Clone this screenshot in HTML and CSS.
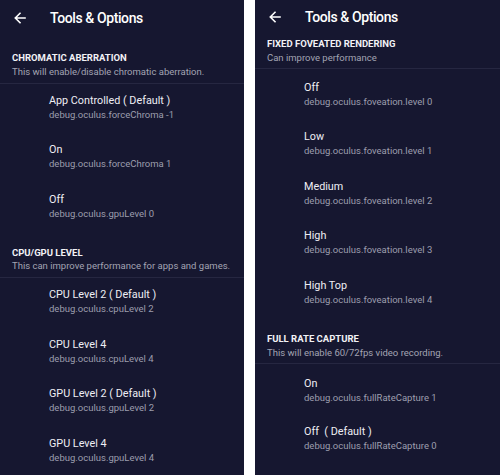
FILE: index.html
```html
<!DOCTYPE html>
<html>
<head>
<meta charset="utf-8">
<link rel="stylesheet" href="styles.css">
</head>
<body>
<div class="screens">
  <div class="panel panel-left">
    <div class="appbar">
      <svg class="back" viewBox="0 0 12 12" width="12" height="12"><path d="M11 6H1.5M6 1.3L1.3 6 6 10.7" fill="none" stroke="#fff" stroke-width="1.6" stroke-linecap="square"/></svg>
      <span class="title">Tools &amp; Options</span>
    </div>
    <div class="section">
      <div class="sec-title">CHROMATIC ABERRATION</div>
      <div class="sec-sub">This will enable/disable chromatic aberration.</div>
    </div>
    <div class="item"><div class="it-title">App Controlled ( Default )</div><div class="it-sub">debug.oculus.forceChroma -1</div></div>
    <div class="item"><div class="it-title">On</div><div class="it-sub">debug.oculus.forceChroma 1</div></div>
    <div class="item"><div class="it-title">Off</div><div class="it-sub">debug.oculus.gpuLevel 0</div></div>
    <div class="section">
      <div class="sec-title">CPU/GPU LEVEL</div>
      <div class="sec-sub">This can improve performance for apps and games.</div>
    </div>
    <div class="item"><div class="it-title">CPU Level 2 ( Default )</div><div class="it-sub">debug.oculus.cpuLevel 2</div></div>
    <div class="item"><div class="it-title">CPU Level 4</div><div class="it-sub">debug.oculus.cpuLevel 4</div></div>
    <div class="item"><div class="it-title">GPU Level 2 ( Default )</div><div class="it-sub">debug.oculus.gpuLevel 2</div></div>
    <div class="item"><div class="it-title">GPU Level 4</div><div class="it-sub">debug.oculus.gpuLevel 4</div></div>
  </div>
  <div class="panel panel-right">
    <div class="appbar">
      <svg class="back" viewBox="0 0 12 12" width="12" height="12"><path d="M11 6H1.5M6 1.3L1.3 6 6 10.7" fill="none" stroke="#fff" stroke-width="1.6" stroke-linecap="square"/></svg>
      <span class="title">Tools &amp; Options</span>
    </div>
    <div class="section section-first">
      <div class="sec-title">FIXED FOVEATED RENDERING</div>
      <div class="sec-sub">Can improve performance</div>
    </div>
    <div class="item"><div class="it-title">Off</div><div class="it-sub">debug.oculus.foveation.level 0</div></div>
    <div class="item"><div class="it-title">Low</div><div class="it-sub">debug.oculus.foveation.level 1</div></div>
    <div class="item"><div class="it-title">Medium</div><div class="it-sub">debug.oculus.foveation.level 2</div></div>
    <div class="item"><div class="it-title">High</div><div class="it-sub">debug.oculus.foveation.level 3</div></div>
    <div class="item"><div class="it-title">High Top</div><div class="it-sub">debug.oculus.foveation.level 4</div></div>
    <div class="section">
      <div class="sec-title">FULL RATE CAPTURE</div>
      <div class="sec-sub">This will enable 60/72fps video recording.</div>
    </div>
    <div class="item item-tight"><div class="it-title">On</div><div class="it-sub">debug.oculus.fullRateCapture 1</div></div>
    <div class="item item-tight"><div class="it-title">Off&nbsp; ( Default )</div><div class="it-sub">debug.oculus.fullRateCapture 0</div></div>
  </div>
</div>
</body>
</html>
```

FILE: styles.css
```css
html, body {
  margin: 0;
  padding: 0;
  background: #ffffff;
}
body {
  width: 500px;
  height: 475px;
  overflow: hidden;
  font-family: Roboto, "Liberation Sans", sans-serif;
}
.screens {
  display: flex;
  gap: 11px;
  height: 475px;
}
.panel {
  background: #161730;
  height: 475px;
  overflow: hidden;
  display: flex;
  flex-direction: column;
}
.panel-left { width: 244px; }
.panel-right { width: 245px; }

.appbar {
  height: 34px;
  flex: none;
  display: flex;
  align-items: center;
  padding-left: 14px;
}
.panel-left .appbar { height: 36px; }
.back { flex: none; }
.title {
  margin-left: 24px;
  color: #ffffff;
  font-size: 14px;
  font-weight: 500;
  letter-spacing: -0.4px;
}

.section {
  flex: none;
  padding: 13.25px 12px 4.5px;
  border-bottom: 1px solid #262741;
}
.panel-left .section:nth-child(2) { padding-top: 15.25px; }
.section-first { padding-top: 3.25px; padding-bottom: 3.5px; }
.panel-right .section:not(.section-first) { padding-top: 15.75px; padding-bottom: 3.75px; }
.sec-title {
  color: #f2f2f6;
  font-size: 9.5px;
  font-weight: 700;
  line-height: 13.5px;
}
.sec-sub {
  color: #a3a4b3;
  font-size: 9.5px;
  line-height: 13.5px;
}

.item {
  flex: none;
  height: 49.5px;
  box-sizing: border-box;
  padding: 10px 0 0 49px;
}
.panel-right .item { padding-top: 12px; }
.panel-right .item-tight { height: 48px; padding-top: 13.5px; }
.it-title {
  color: #eeeef4;
  font-size: 10.8px;
  line-height: 14px;
}
.it-sub {
  color: #9d9eae;
  font-size: 9.5px;
  line-height: 14px;
}
```
